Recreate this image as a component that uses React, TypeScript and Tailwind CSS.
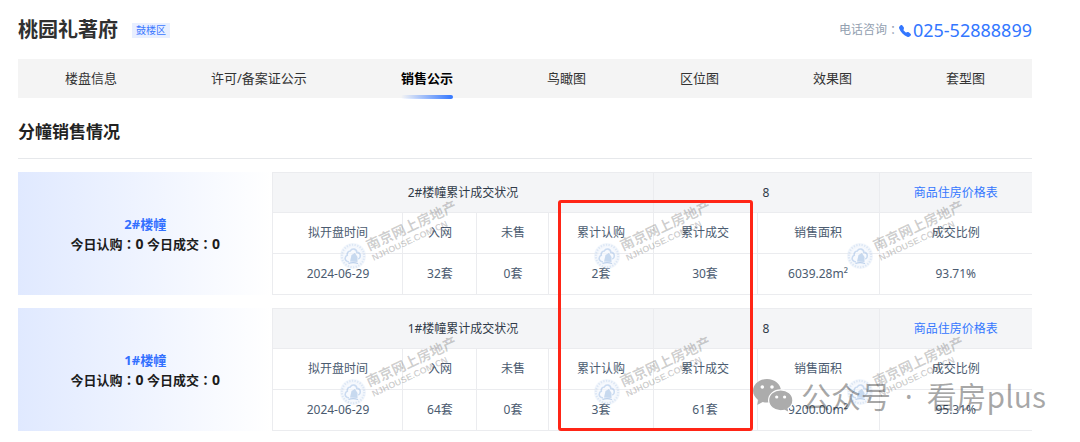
import React from "react";
import { BsTelephoneFill } from "react-icons/bs";

type Building = {
  name: string;
  floors: string;
  values: string[];
};

const tabs = ["楼盘信息", "许可/备案证公示", "销售公示", "鸟瞰图", "区位图", "效果图", "套型图"];
const activeTab = "销售公示";

const columns = ["拟开盘时间", "入网", "未售", "累计认购", "累计成交", "销售面积", "成交比例"];

const buildings: Building[] = [
  { name: "2#楼幢", floors: "8", values: ["2024-06-29", "32套", "0套", "2套", "30套", "6039.28m²", "93.71%"] },
  { name: "1#楼幢", floors: "8", values: ["2024-06-29", "64套", "0套", "3套", "61套", "9200.00m²", "95.31%"] },
];

function Colon() {
  return <span className="font-['Noto_Sans_CJK_TC',sans-serif]">：</span>;
}

function ChatBubbles() {
  return (
    <svg viewBox="0 0 40 34" className="h-[34px] w-10" aria-hidden="true">
      <path d="M14 0C6.300 0 0 5.200 0 11.800c0 3.700 2 6.900 5.200 9.100L4.200 26l5.500-2.900c1.400.4 2.800.5 4.300.5 7.700 0 14-5.200 14-11.800S21.700 0 14 0z" fill="#acacac" />
      <circle cx="9.300" cy="8" r="1.800" fill="#fff" />
      <circle cx="19" cy="8" r="1.800" fill="#fff" />
      <path
        d="M27.700 10.800c-6.700 0-12.100 4.700-12.100 10.500s5.400 10.500 12.100 10.500c1.400 0 2.700-.2 3.900-.5l4.500 2.500-.9-4.200c2.900-1.900 4.700-4.900 4.700-8.300 0-5.800-5.500-10.500-12.200-10.500z"
        fill="#acacac"
        stroke="#fff"
        strokeWidth="1.200"
      />
      <circle cx="23.700" cy="18" r="1.600" fill="#fff" />
      <circle cx="31.600" cy="18" r="1.600" fill="#fff" />
    </svg>
  );
}

function Stamp() {
  return (
    <div className="relative h-7 w-7">
      <svg viewBox="0 0 28 28" className="h-7 w-7 opacity-60" aria-hidden="true">
        <circle cx="14" cy="14" r="13" fill="#dfeaf8" fillOpacity="0.55" />
        <circle cx="14" cy="14" r="11.2" fill="none" stroke="#b4cbe9" strokeOpacity="0.7" strokeWidth="2" strokeDasharray="1.3 1.4" />
        <circle cx="14" cy="14" r="9" fill="#f5f9ff" fillOpacity="0.8" />
        <path
          d="M10 20c-3-.4-4.400-2.600-3.600-4.700.3-1 1-1.700 1.900-2-.5-2.500 1-4.300 3-4.300.8-1.600 2.300-2.300 3.900-1.900 1.700.4 2.600 1.700 2.600 3.300 2.100.1 3.500 1.600 3.500 3.500 0 1.500-.8 2.600-2 3.200"
          fill="none"
          stroke="#a9c4e8"
          strokeWidth="1.600"
        />
        <path d="M11 19.500l1.500-6.500 3.500-2 2.500 4v5z" fill="#8fb1de" fillOpacity="0.8" />
        <path d="M9.500 21.500c3-1.200 6-1.200 9.500 0" fill="none" stroke="#8fb1de" strokeWidth="1.200" />
      </svg>
      <div className="absolute -top-1 left-[30px] origin-left -rotate-[25deg] whitespace-nowrap text-black/20">
        <p className="text-[14px] font-bold leading-4">南京网上房地产</p>
        <p className="font-['Liberation_Sans',sans-serif] text-[9px] font-bold leading-[10px]">NJHOUSE.COM.CN</p>
      </div>
    </div>
  );
}

function BuildingRow({ building }: { building: Building }) {
  return (
    <article className="flex">
      <div className="flex w-[255px] flex-col items-center justify-center bg-linear-to-r from-[#e0e9ff] to-white text-[13px] font-bold leading-5 text-[#1c1c1c]">
        <h3 className="text-[#3370ff]">{building.name}</h3>
        <p>
          今日认购<Colon /><span className="text-[14px]">0</span> 今日成交<Colon /><span className="text-[14px]">0</span>
        </p>
      </div>
      <div className="relative flex-1">
        <table className="w-full table-fixed border-collapse text-center text-[12px] leading-5 text-[#4b5b70]">
          <colgroup>
            <col className="w-[130px]" />
            <col className="w-[74px]" />
            <col className="w-[72px]" />
            <col className="w-[104px]" />
            <col className="w-[104px]" />
            <col className="w-[122px]" />
            <col className="w-[153px]" />
          </colgroup>
          <thead>
            <tr className="bg-[#f4f5f7] text-[#303a48]">
              <th colSpan={4} className="h-10 border-y border-l border-[#ebecef] font-normal">
                {building.name}累计成交状况
              </th>
              <th colSpan={2} className="border border-[#ebecef] font-normal">{building.floors}</th>
              <th className="border-y border-[#ebecef] font-normal">
                <a href="#prices" className="text-[#3377ff]">商品住房价格表</a>
              </th>
            </tr>
            <tr>
              {columns.map((c) => (
                <th key={c} className="h-[41px] border-y border-l border-[#ebecef] font-normal">{c}</th>
              ))}
            </tr>
          </thead>
          <tbody>
            <tr>
              {building.values.map((v, i) => (
                <td key={columns[i]} className="h-[41px] border-y border-l border-[#ebecef]">{v}</td>
              ))}
            </tr>
          </tbody>
        </table>
        <div className="pointer-events-none absolute inset-x-0 top-[70px] grid grid-cols-3 *:ml-[67px]" aria-hidden="true">
          <Stamp />
          <Stamp />
          <Stamp />
        </div>
      </div>
    </article>
  );
}

export default function App() {
  return (
    <main className="bg-white pb-3 pl-[18px] pr-12 pt-4 font-['Noto_Sans','Noto_Sans_CJK_SC',sans-serif]">
      <header className="flex h-7 items-center justify-between">
        <div className="flex items-center gap-[14px]">
          <h1 className="text-[20px] font-bold leading-7 text-[#303030]">桃园礼著府</h1>
          <span className="bg-[#e8efff] px-1 text-[10px] leading-[15px] text-[#3b78ff]">鼓楼区</span>
        </div>
        <p className="flex items-center text-[12px] text-[#93a0b0]">
          电话咨询<Colon />
          <a href="tel:025-52888899" className="flex items-center gap-0.5 text-[#3377ff]">
            <BsTelephoneFill className="mt-0.5 h-3 w-3" />
            <span className="text-[18px] leading-7">025-52888899</span>
          </a>
        </p>
      </header>

      <nav className="mt-[15px] flex bg-[#f4f4f4] text-[13px] leading-[39px] text-[#333]">
        {tabs.map((t) => (
          <a key={t} href="#tab" className="flex flex-auto justify-center" aria-current={t === activeTab ? "page" : undefined}>
            {t === activeTab ? (
              <span className="relative font-bold text-black">
                {t}
                <span className="absolute inset-x-0 -bottom-px h-1 rounded-full bg-linear-to-r from-transparent to-[#3377ff]" />
              </span>
            ) : (
              t
            )}
          </a>
        ))}
      </nav>

      <h2 className="border-b border-[#e6e8eb] pb-3 pt-5 text-[17px] font-bold leading-7 text-[#222]">分幢销售情况</h2>

      <section className="relative mt-[13px] flex flex-col gap-[13px]">
        {buildings.map((b) => (
          <BuildingRow key={b.name} building={b} />
        ))}
        <div className="pointer-events-none absolute bottom-0 left-[53.25%] top-7 w-[19.25%] rounded-[3px] border-[3px] border-[#ff2516]" />
        <div className="pointer-events-none absolute -right-[14px] bottom-3 flex items-center gap-2 text-black/35">
          <ChatBubbles />
          <p className="whitespace-nowrap font-['Noto_Sans_CJK_SC',sans-serif] text-[30px] leading-[44px]">
            公众号<span className="mx-1.5 font-['Noto_Sans',sans-serif]"> · </span>看房plus
          </p>
        </div>
      </section>
    </main>
  );
}
